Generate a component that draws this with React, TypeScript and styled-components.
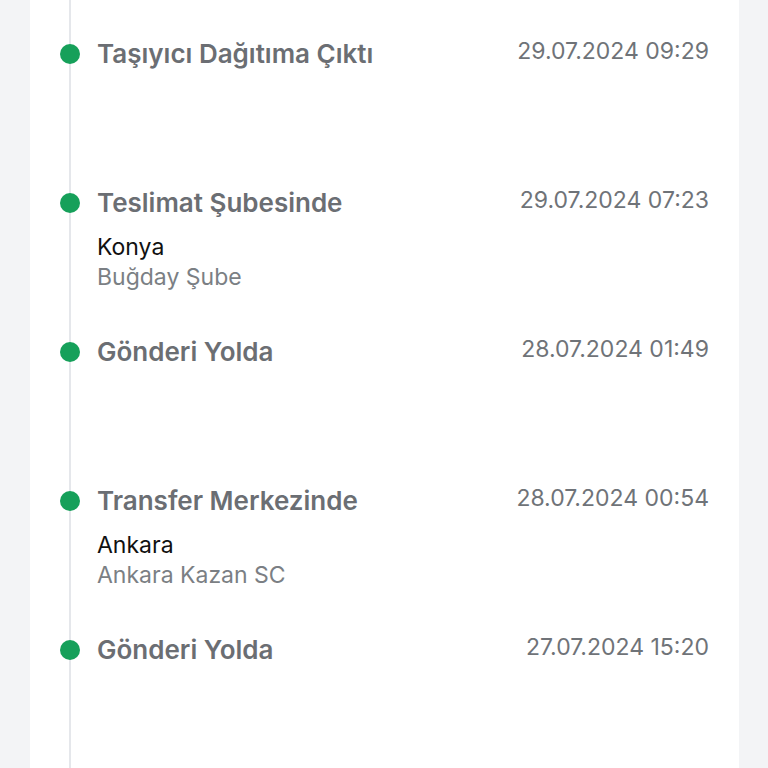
import React from 'react';
import styled, { createGlobalStyle } from 'styled-components';

const GlobalStyle = createGlobalStyle`
  body {
    margin: 0;
    background-color: #f3f4f6;
    font-family: Inter, "Noto Sans", sans-serif;
  }
`;

const Card = styled.div`
  margin-left: 30px;
  width: 709px;
  min-height: 768px;
  background-color: #fff;
  overflow: hidden;
`;

const Timeline = styled.ul`
  list-style: none;
  margin: 0 0 0 39px;
  padding: 39px 0 0 0;
  border-left: 2px solid #e5e7eb;
`;

const Item = styled.li`
  position: relative;
  height: 149px;
  padding: 0 30px 0 26px;
  box-sizing: border-box;
`;

const Dot = styled.span`
  position: absolute;
  left: -11px;
  top: 5px;
  width: 20px;
  height: 20px;
  border-radius: 50%;
  background-color: #16a05a;
`;

const Head = styled.div`
  display: flex;
  justify-content: space-between;
  align-items: flex-start;
`;

const Title = styled.div`
  font-size: 26px;
  line-height: 30px;
  font-weight: 600;
  color: #6b6e73;
`;

const Date = styled.div`
  font-size: 23px;
  line-height: 24px;
  color: #6f7378;
`;

const City = styled.div`
  margin-top: 14px;
  font-size: 23px;
  line-height: 30px;
  color: #111;
`;

const Branch = styled.div`
  font-size: 23px;
  line-height: 30px;
  color: #7b7f84;
`;

type Step = { title: string; date: string; city?: string; branch?: string };

const steps: Step[] = [
  { title: 'Taşıyıcı Dağıtıma Çıktı', date: '29.07.2024 09:29' },
  { title: 'Teslimat Şubesinde', date: '29.07.2024 07:23', city: 'Konya', branch: 'Buğday Şube' },
  { title: 'Gönderi Yolda', date: '28.07.2024 01:49' },
  { title: 'Transfer Merkezinde', date: '28.07.2024 00:54', city: 'Ankara', branch: 'Ankara Kazan SC' },
  { title: 'Gönderi Yolda', date: '27.07.2024 15:20' },
];

const App: React.FC = () => (
  <>
    <GlobalStyle />
    <Card>
      <Timeline>
        {steps.map((s, i) => (
          <Item key={i}>
            <Dot />
            <Head>
              <Title>{s.title}</Title>
              <Date>{s.date}</Date>
            </Head>
            {s.city && <City>{s.city}</City>}
            {s.branch && <Branch>{s.branch}</Branch>}
          </Item>
        ))}
      </Timeline>
    </Card>
  </>
);

export default App;
